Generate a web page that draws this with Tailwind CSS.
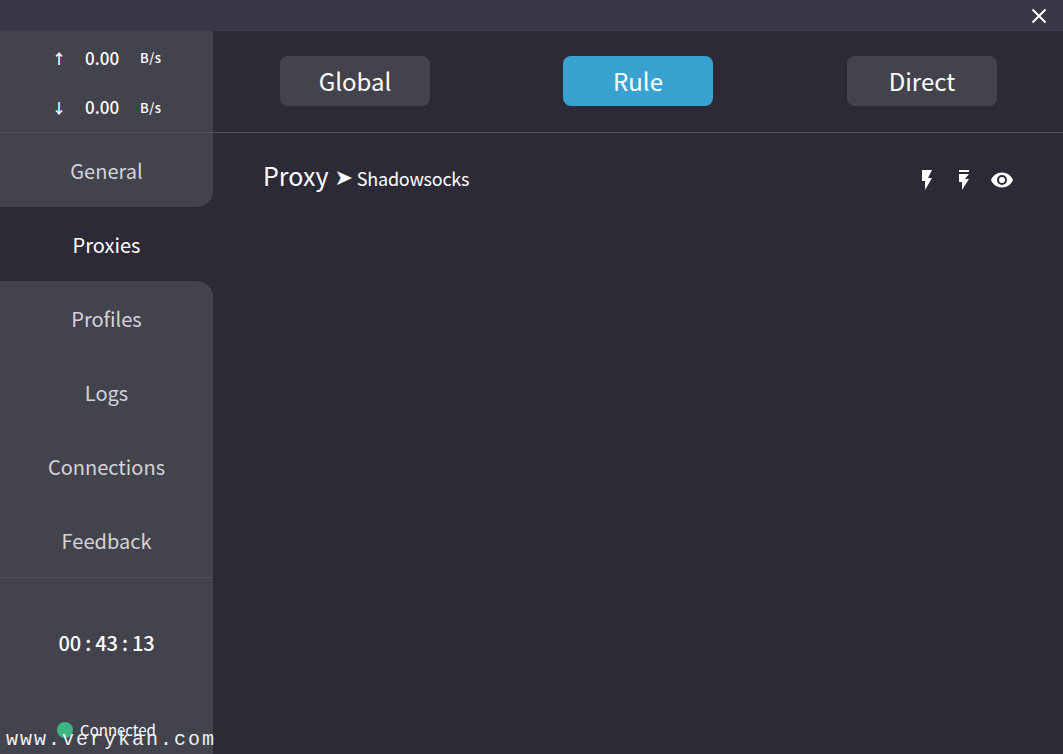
<!DOCTYPE html>
<html lang="en">
<head>
  <meta charset="UTF-8" />
  <title>Clash</title>
  <script src="https://cdn.jsdelivr.net/npm/@tailwindcss/browser@4"></script>
</head>
<body class="bg-[#2d2a38] text-white font-['Noto_Sans_CJK_SC','Noto_Sans',sans-serif] h-[754px] w-[1063px] overflow-hidden relative flex flex-col">

  <!-- title bar -->
  <div class="h-[31px] shrink-0 bg-[#383846] flex justify-end items-center pr-[16px]">
    <svg class="w-[16px] h-[16px]" viewBox="0 0 16 16" fill="none" stroke="white" stroke-width="2"><path d="M1.500 1.500 14.500 14.500M14.500 1.500 1.500 14.500" /></svg>
  </div>

  <div class="flex flex-1 min-h-0">
    <!-- sidebar -->
    <div class="w-[213px] shrink-0 flex flex-col">
      <div class="bg-[#43434e] rounded-br-[16px]">
        <div class="h-[102px] border-b border-[#5a5253] flex flex-col text-[#fff] font-medium">
          <div class="h-[51px] flex items-center pt-[3px] relative">
            <span class="w-[115px] pl-[52px] text-[14px] leading-none font-bold">↑</span>
            <span class="absolute left-[85px] text-[17px]">0.00</span>
            <span class="absolute left-[140px] text-[13px] tracking-[0.5px]">B/s</span>
          </div>
          <div class="h-[51px] flex items-center relative">
            <span class="w-[115px] pl-[52px] text-[14px] leading-none font-bold">↓</span>
            <span class="absolute left-[85px] text-[17px]">0.00</span>
            <span class="absolute left-[140px] text-[13px] tracking-[0.5px] pt-[1px]">B/s</span>
          </div>
        </div>
        <div class="h-[74px] pt-[2px] flex items-center justify-center text-[20px] text-[#d4d4d6]">General</div>
      </div>
      <div class="h-[74px] pt-[2px] flex items-center justify-center text-[20px] text-white">Proxies</div>
      <div class="flex-1 bg-[#43434e] rounded-tr-[16px] flex flex-col">
        <div class="h-[74px] pt-[2px] flex items-center justify-center text-[20px] text-[#d4d4d6]">Profiles</div>
        <div class="h-[74px] pt-[2px] flex items-center justify-center text-[20px] text-[#d4d4d6]">Logs</div>
        <div class="h-[74px] pt-[2px] flex items-center justify-center text-[20px] text-[#d4d4d6]">Connections</div>
        <div class="h-[74px] pt-[2px] flex items-center justify-center text-[20px] text-[#d4d4d6]">Feedback</div>
        <div class="border-t border-[#55504f] flex-1 flex flex-col items-center">
          <div class="mt-[47px] text-[20px] leading-[36px] font-medium tracking-[-0.2px]">00 : 43 : 13</div>
          <div class="mt-[57px] flex items-center gap-[7px] text-[15px] leading-[24px]">
            <span class="w-[16px] h-[16px] rounded-full bg-[#3cb783]"></span>
            <span>Connected</span>
          </div>
        </div>
      </div>
    </div>

    <!-- main -->
    <div class="flex-1 flex flex-col">
      <div class="h-[102px] shrink-0 border-b border-[#5a5253] flex items-start pt-[25px] pl-[67px] gap-[133px]">
        <button class="w-[150px] h-[50px] rounded-lg bg-[#43434e] text-[24px] text-white">Global</button>
        <button class="w-[150px] h-[50px] rounded-lg bg-[#38a3d0] text-[24px] text-white">Rule</button>
        <button class="w-[150px] h-[50px] rounded-lg bg-[#43434e] text-[24px] text-white ml-[1px]">Direct</button>
      </div>
      <div class="flex items-center pl-[50px] pr-[49px] h-[90px]">
        <span class="text-[25px] leading-none -mt-[5px]">Proxy</span>
        <span class="text-[22px] leading-none ml-[6px] mr-[4px] font-['DejaVu_Sans']">➤</span>
        <span class="text-[18px] leading-none tracking-[-0.25px] -mt-[1px]">Shadowsocks</span>
        <div class="ml-auto flex items-center mt-[3px]">
          <svg class="w-[24px] h-[24px]" viewBox="0 0 24 24" fill="white"><path d="M7 2v11h3v9l7-12h-4l4-8z" /></svg>
          <svg class="w-[24px] h-[24px] ml-[13px]" viewBox="0 0 24 24" fill="white"><path d="M7 2h10v2H7zM7 6h10l-4 5h4l-7 11v-8H7z" /></svg>
          <svg class="w-[24px] h-[24px] ml-[14px]" viewBox="0 0 24 24" fill="white"><path d="M12 4.500C7 4.500 2.730 7.610 1 12c1.730 4.390 6 7.500 11 7.500s9.270-3.110 11-7.500c-1.730-4.390-6-7.500-11-7.500zM12 17a5 5 0 1 1 0-10 5 5 0 0 1 0 10zm0-8a3 3 0 1 0 0 6 3 3 0 0 0 0-6z" /></svg>
        </div>
      </div>
    </div>
  </div>

  <!-- watermark -->
  <div class="absolute left-[6px] top-[726px] font-['Liberation_Mono',monospace] text-[20px] leading-[28px] tracking-[2px] text-[#f0f0f0] whitespace-nowrap">www.verykan.com</div>
</body>
</html>
